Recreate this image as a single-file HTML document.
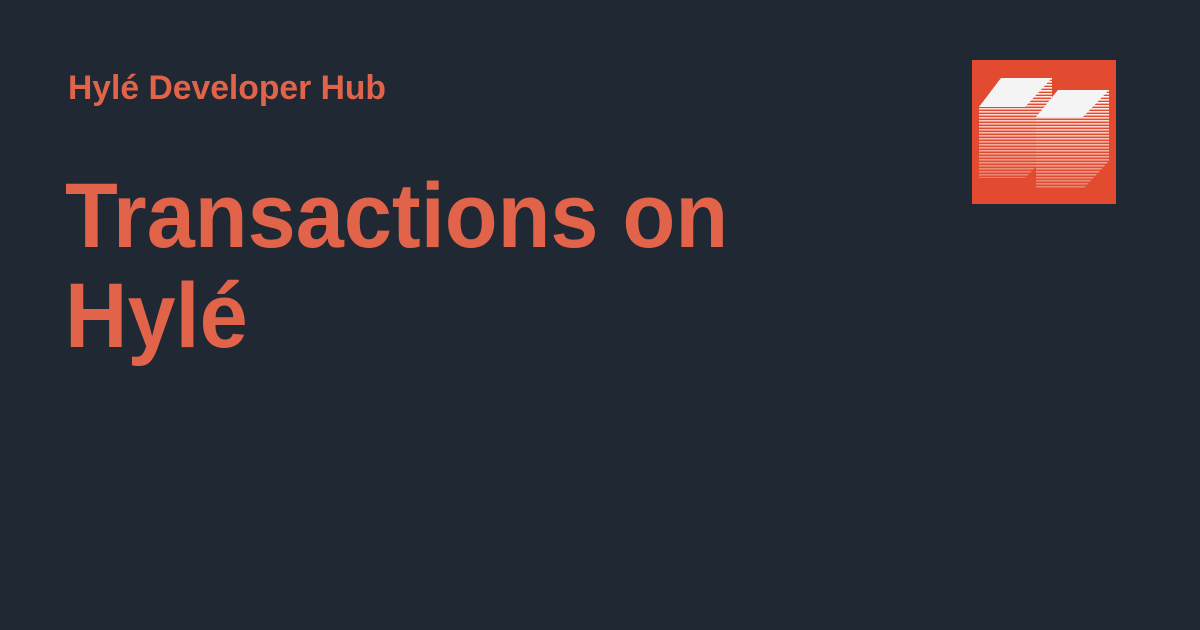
<!DOCTYPE html>
<html><head><style>
html,body{margin:0;padding:0}
body{width:1200px;height:630px;background:#1f2833;position:relative;overflow:hidden;font-family:"Liberation Sans",sans-serif;color:#e0634a}
.sub{position:absolute;left:68px;top:68px;font-size:34px;font-weight:bold;line-height:40px;white-space:nowrap;transform:scaleX(0.99);transform-origin:0 0}
.t{position:absolute;left:65px;top:166px;font-size:92px;font-weight:bold;line-height:100px;white-space:nowrap;transform:scaleX(0.94);transform-origin:0 0}
svg{position:absolute;left:972px;top:60px}
</style></head><body>
<div class="sub">Hylé Developer Hub</div>
<div class="t">Transactions on<br>Hylé</div>
<svg width="144" height="144" viewBox="0 0 144 144">
<defs>
<pattern id="st" width="4" height="3" patternUnits="userSpaceOnUse"><rect width="4" height="1.6" fill="#fff"/></pattern>
<linearGradient id="g" x1="0" y1="0" x2="0" y2="1"><stop offset="0" stop-color="#fff" stop-opacity="1"/><stop offset="1" stop-color="#fff" stop-opacity=".3"/></linearGradient>
<mask id="m"><rect width="144" height="144" fill="url(#st)"/></mask>
</defs>
<rect width="144" height="144" fill="#e24b2f"/>
<g>
<polygon points="7,47 29,18 80,18 80,90 53,118 7,118" fill="url(#g)" mask="url(#m)"/>
<polygon points="7,47 29,18 80,18 53,47" fill="#f4f4f4"/>
<polygon points="64,57 86,30 137,30 137,101 111,129 64,129" fill="#e24b2f"/>
<polygon points="64,57 86,30 137,30 137,101 111,129 64,129" fill="url(#g)" mask="url(#m)"/>
<polygon points="64,57 86,30 137,30 111,57" fill="#f4f4f4"/>
</g>
</svg>
</body></html>
